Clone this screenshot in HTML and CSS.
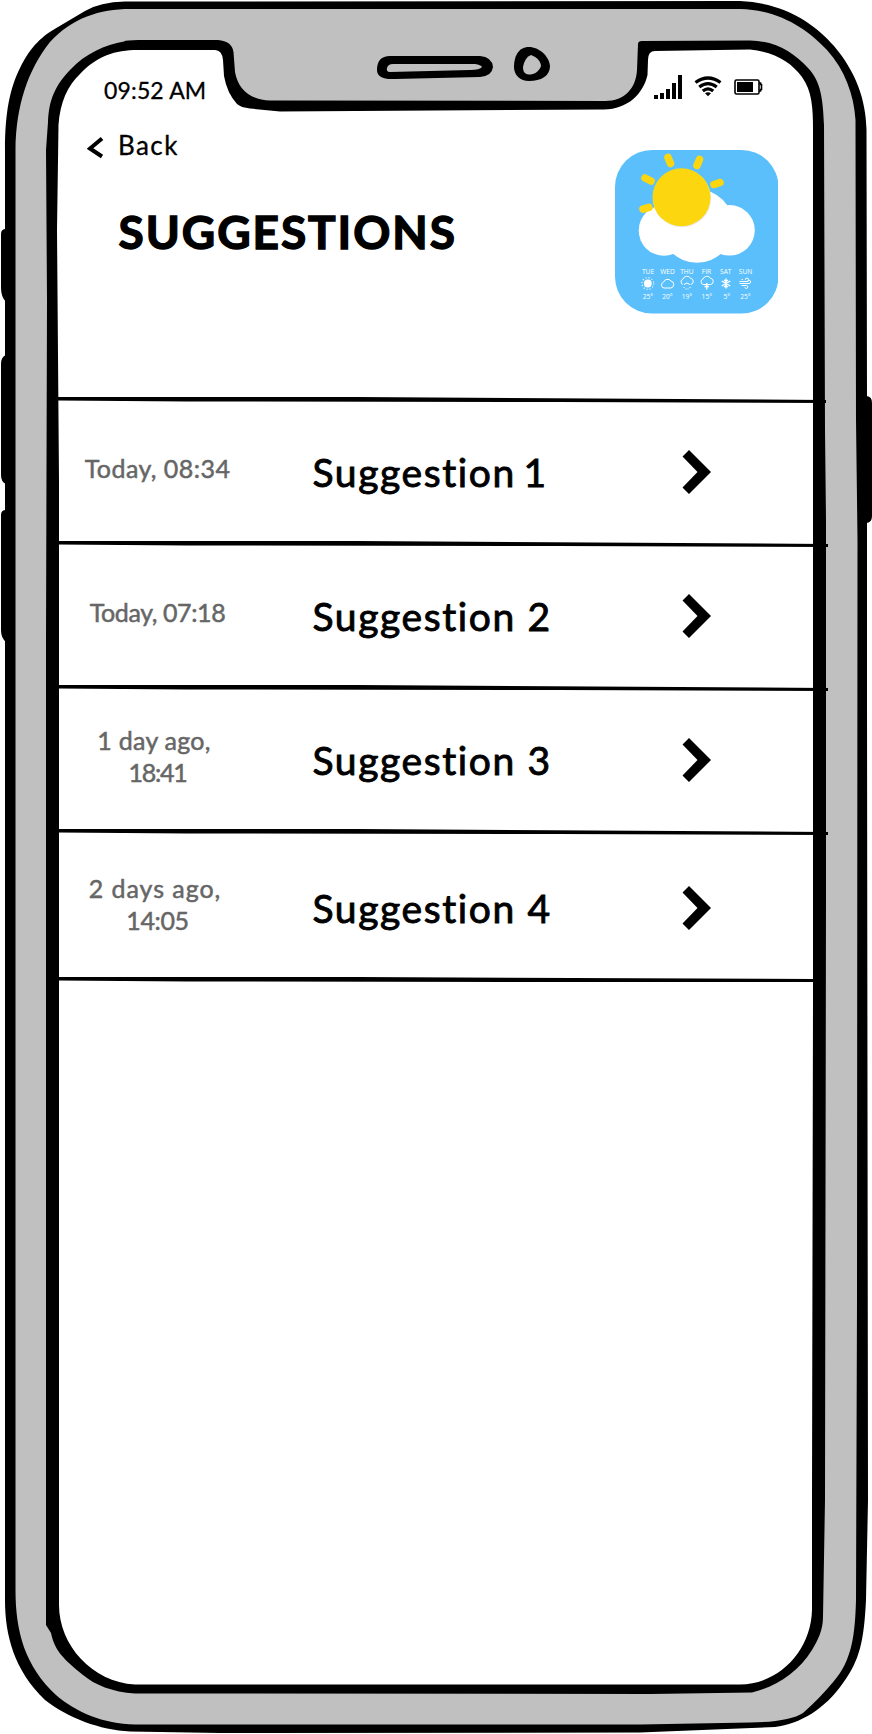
FILE: index.html
```html
<!DOCTYPE html>
<html lang="en">
<head>
<meta charset="utf-8">
<title>Suggestions</title>
<link rel="stylesheet" href="styles.css">
</head>
<body>
<div class="phone">
  <svg class="frame" viewBox="0 0 872 1734" aria-hidden="true">
    <path d="M6 229Q1 229 1 234V288Q1 297 6 302ZM6 355Q1 357 1 364V475Q1 482 6 484ZM6 510Q1 510 1 515V630Q1 638 6 642ZM866 396Q872 396 872 403V516Q872 523 866 523Z"/>
    <path d="M5 150C5 112 10 88 20 68C31 46 42 36 58 27L85 11Q100 2 125 1.500L740 1C785 3 815 24 834 46C856 72 866 100 866.500 130L867 396V523L867 700L868 1500L866 1600C864 1640 860 1660 843 1683C825 1709 800 1724 775 1727L640 1732.500L220 1733L130 1731.500C100 1730 68 1718 45 1700C14 1670 5 1635 5 1600Z"/>
    <path class="metal" d="M15.500 150C16 105 28 70 50 42C72 18 100 9 130 9L740 9C780 10 808 30 827 50C845 70 854 95 855.500 120L856 420L857.500 540L857 1300L856 1600C855 1635 852 1660 834 1681Q820 1698 803 1713Q789 1722 750 1722.500L640 1724.500L135 1724.500C103 1724 76 1712 56 1695C25 1666 15.500 1632 15.500 1590Z"/>
    <path d="M46 150L48 122C49 98 56 85 70 70C86 53 105 45 124 41.500Q126 40 138 40L218 40Q232 41 233.500 52L235 72C238 89 250 100 270 100.500L605 101C625 101 636 88 637 70L638 44Q638 41 642 41L750 40.500C777 41 794 53 808 68C821 81 823 100 824 125L825 430L826 520L826 900L825 1500L823 1617C823 1630 818 1640 812 1650C798 1673 775 1687 752 1692.500L650 1694L135 1693.500C112 1692 95 1685 83 1675C65 1660 55 1652 51 1633L46 1625V640L47 300Z"/>
    <path class="glass" d="M57 230L58.500 125C60 102 68 85 80 74C97 56 115 50 138 50L215 50Q222 50 223 60L224 76Q227 93 237 104Q241 107.500 250 108.500L280 111.500L604 109.500C628 109 643 94 647.500 75L648 60Q648 51 655 51L750 49.500C775 52 791 62 802 77C812 91 813 108 813 130L813 1000L812 1500V1610C811 1650 780 1684 740 1684.500L135 1684.500C92 1682 59 1645 59 1605L59 480Z"/>
    <path d="M390 56L480 56Q492 57 493 67Q492 76 480 77L395 79Q377 80 377 70Q377 56 390 56Z"/>
    <path class="metal" d="M393 64L475 64Q481 65 482 67Q480 70 470 70L390 72Q386 72 387 68Q388 64 393 64Z"/>
    <path d="M529 47C539 47 549 56 550 66C550 76 541 81 529 81C520 81 514 75 514 67C514 57 518 47 529 47Z"/>
    <path class="metal" d="M531 55C537 57 541 62 541 66C539 72 534 74.500 529 74.500C524 74 523 71 523 67Q525 57 531 55Z"/>
  </svg>

  <header class="status">
    <span class="clock">09:52 AM</span>
    <svg class="status-icons" viewBox="0 0 110 26" aria-hidden="true">
      <path d="M1 21h4v4h-4zM7 19h4v6h-4zM13 15h4v10h-4zM19 9h4v16h-4zM25 1h4v24h-4z"/>
      <g class="waves"><path d="M42.500 8.500Q55 -0.500 67.500 8.500M46.300 13Q55 6.300 63.700 13M49.800 17Q55 12.800 60.200 17"/></g>
      <path d="M52 19.300Q55 17.300 58 19.300L55 22.200Z"/>
      <rect class="cell" x="82" y="6" width="24" height="14" rx="1.500"/>
      <path class="cell" d="M106 9h1.500v1.500h1v5h-1v1.500h-1.500"/>
      <rect x="84" y="8" width="16" height="10"/>
    </svg>
  </header>

  <nav class="back">
    <svg class="back-icon" viewBox="0 0 18 24" aria-hidden="true"><path d="M15 2.500L3 12.500L15 20.500"/></svg>
    <span>Back</span>
  </nav>

  <section class="hero">
    <h1>SUGGESTIONS</h1>
    <svg class="weather" viewBox="4.500 5 163.500 163.500" role="img" aria-label="Weather">
      <rect class="sky" x="4.500" y="5" width="163.500" height="163.500" rx="37"/>
      <g class="cloud"><circle cx="53.500" cy="85.500" r="25.300"/><circle cx="119" cy="85.300" r="25.300"/><circle cx="86.500" cy="81" r="36.700"/></g>
      <circle class="shade" cx="71.500" cy="53.300" r="29"/>
      <circle class="sun" cx="71" cy="52.300" r="29"/>
      <path class="rays" d="M57.500 12.500L60 18.500M89 14.500L86.500 20.500M34.500 33L40.500 36M103.500 39.500L109.500 37.500M32.500 64.200L38.500 62.300"/>
      <g class="days"><text x="37.500" y="129">TUE</text><text x="57" y="129">WED</text><text x="76.300" y="129">THU</text><text x="96" y="129">FIR</text><text x="115.300" y="129">SAT</text><text x="135" y="129">SUN</text></g>
      <g class="days"><text x="37.500" y="153.800">25°</text><text x="57" y="153.800">20°</text><text x="76.500" y="153.800">19°</text><text x="96.300" y="153.800">15°</text><text x="116.300" y="153.800">5°</text><text x="135" y="153.800">25°</text></g>
      <circle class="cloud" cx="37.300" cy="138.500" r="3.900"/>
      <circle class="rim" cx="37.300" cy="138.500" r="5.900"/>
      <g class="line">
        <path d="M53.500 143a3 3 0 0 1-.5-5.800a4.300 4.300 0 0 1 7.500-1.200a3.600 3.600 0 0 1 0 7Z"/>
        <path d="M72.500 139.500a2.900 2.900 0 0 1 0-5.500a4.200 4.200 0 0 1 7.500-.8a3.200 3.200 0 0 1 .2 6.300M73.500 139.500q3-3 6 0M73.500 142v1M79.500 142v1M75.500 143.500v1M77.500 143.500v1"/>
        <path d="M92.500 139.500a2.900 2.900 0 0 1 0-5.500a4.200 4.200 0 0 1 7.500-.8a3.200 3.200 0 0 1 .2 6.300h-7.700"/>
        <path class="bold" d="M96.200 138v6.500M94 141.500h4.400"/>
        <path class="bold" d="M115.500 133.500v10M111.200 136l8.600 5M111.200 141l8.600-5M113.500 135l2 1.500l2-1.500M113.500 142l2-1.500l2 1.500"/>
        <path d="M129 136.500h7.500a1.700 1.700 0 1 0-1.700-1.700M131 134.500h1.500M129 138.500h9.500a1.600 1.600 0 1 0-1.600-1.600M131 140.500h4.800a1.500 1.500 0 1 1-1.500 1.700"/>
      </g>
    </svg>
  </section>

  <main class="list">
    <article class="row">
      <svg class="divider" viewBox="0 0 770 8" aria-hidden="true"><path d="M0 0L300 0L768 3V6L500 5L130 4.500L0 3.500Z"/></svg>
      <p class="time"><span class="wide">Today, 08:34</span></p><h2 class="first">Suggestion 1</h2>
      <svg class="chevron" viewBox="0 0 30 46" aria-hidden="true"><path d="M0.500 7.500L7 1L29 23L7 45L0.500 38.500L15.500 23Z"/></svg>
    </article>
    <article class="row">
      <svg class="divider" viewBox="0 0 770 8" aria-hidden="true"><path d="M0 0L300 0L770 3V6L500 5L130 4.500L0 3.500Z"/></svg>
      <p class="time"><span class="tight">Today, 07:18</span></p><h2>Suggestion 2</h2>
      <svg class="chevron" viewBox="0 0 30 46" aria-hidden="true"><path d="M0.500 7.500L7 1L29 23L7 45L0.500 38.500L15.500 23Z"/></svg>
    </article>
    <article class="row">
      <svg class="divider" viewBox="0 0 770 8" aria-hidden="true"><path d="M0 0L300 0L770 3V6L500 5L130 4.500L0 3.500Z"/></svg>
      <p class="time"><span class="day">1 day ago,</span><br><span class="tighter">18:41</span></p><h2>Suggestion 3</h2>
      <svg class="chevron" viewBox="0 0 30 46" aria-hidden="true"><path d="M0.500 7.500L7 1L29 23L7 45L0.500 38.500L15.500 23Z"/></svg>
    </article>
    <article class="row last">
      <svg class="divider" viewBox="0 0 770 8" aria-hidden="true"><path d="M0 0L300 0L770 3V6L500 5L130 4.500L0 3.500Z"/></svg>
      <p class="time"><span class="days-ago">2 days ago,</span><br><span class="tight">14:05</span></p><h2>Suggestion 4</h2>
      <svg class="chevron" viewBox="0 0 30 46" aria-hidden="true"><path d="M0.500 7.500L7 1L29 23L7 45L0.500 38.500L15.500 23Z"/></svg>
      <svg class="divider end" viewBox="0 0 770 8" aria-hidden="true"><path d="M0 0L300 0L756 2V5L500 5L130 4.500L0 3.500Z"/></svg>
    </article>
  </main>
</div>
</body>
</html>
```

FILE: styles.css
```css
* { box-sizing: border-box; }
body { margin: 0; background: #fff; }
h1, h2, p { margin: 0; }
.phone {
  position: relative;
  width: 872px;
  height: 1734px;
  overflow: hidden;
  color: #000;
  font-family: Lato, sans-serif;
}
.frame { position: absolute; inset: 0; width: 872px; height: 1734px; }
.metal { fill: #c0c0c0; }
.glass { fill: #fff; }
.status, .back, .hero, .list { position: relative; }
.status {
  display: flex;
  justify-content: space-between;
  height: 126px;
  padding: 74px 109px 0 104px;
}
.clock {
  margin-top: 2px;
  font-size: 23px;
  line-height: 28px;
  letter-spacing: 0.15px;
  -webkit-text-stroke: 0.3px;
}
.status-icons { width: 110px; height: 26px; }
.waves { fill: none; stroke: #000; stroke-width: 3.3; }
.cell { fill: none; stroke: #000; stroke-width: 1.6; }
.back {
  display: flex;
  align-items: center;
  gap: 13px;
  height: 24px;
  margin-top: 8px;
  padding-left: 87px;
  font-size: 26px;
  line-height: 24px;
  letter-spacing: 1.4px;
  -webkit-text-stroke: 0.3px;
}
.back span { margin-top: -3px; }
.back-icon { width: 18px; height: 24px; margin-top: 3px; }
.back-icon path { fill: none; stroke: #000; stroke-width: 4; }
.hero {
  display: flex;
  justify-content: space-between;
  height: 247px;
  margin-top: -8px;
  padding: 0 94px 0 118.500px;
}
h1 {
  margin-top: 54px;
  font-size: 46px;
  line-height: 56px;
  font-weight: 700;
  letter-spacing: 1.95px;
  -webkit-text-stroke: 1.4px;
}
.weather { width: 163.5px; height: 163.5px; }
.sky { fill: #5bbffb; }
.cloud { fill: #fff; }
.shade { fill: #e9e9ee; }
.sun { fill: #fcd70f; }
.rays { stroke: #fcd70f; stroke-width: 7.5; stroke-linecap: round; }
.days { fill: #fff; font: 6.6px "Open Sans", sans-serif; text-anchor: middle; }
.rim { fill: none; stroke: #fff; stroke-width: 1.1; stroke-dasharray: 1.1 1.99; }
.line { fill: none; stroke: #fff; stroke-width: 1; }
.bold { stroke-width: 1.4; }
.list { width: 772px; margin-left: 58px; }
.row {
  position: relative;
  display: grid;
  grid-template-columns: 199px 400px 1fr;
  align-items: center;
  height: 144px;
  padding: 6px 0 0;
}
.row.last { height: 148px; padding-top: 10px; }
.divider { position: absolute; left: 0; top: 0; width: 770px; height: 8px; }
.divider.end { top: auto; bottom: -8px; }
.time {
  padding-bottom: 8px;
  color: #666;
  text-align: center;
  font-size: 25px;
  line-height: 32px;
  -webkit-text-stroke: 0.5px;
}
.wide { letter-spacing: 0.45px; }
.tight { letter-spacing: -0.4px; }
.tighter { letter-spacing: -1.3px; }
.day { margin-right: 7px; letter-spacing: 0.25px; }
.days-ago { margin-right: 5px; letter-spacing: 0.95px; }
h2 {
  padding-left: 55.5px;
  font-size: 39px;
  font-weight: 400;
  line-height: 48px;
  letter-spacing: 1.6px;
  -webkit-text-stroke: 0.9px;
}
.first { word-spacing: -4px; }
.chevron { width: 30px; height: 46px; margin-left: 24.500px; }
```
